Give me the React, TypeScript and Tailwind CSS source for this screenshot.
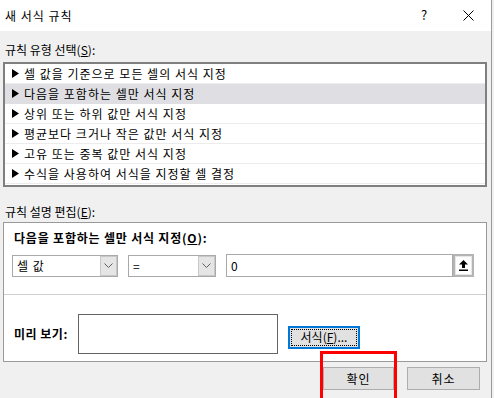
import React from "react";

const font = { fontFamily: '"Noto Sans CJK KR", "Noto Sans", sans-serif' };

function Tri() {
  return (
    <svg width="7" height="9" viewBox="0 0 7 9" className="shrink-0">
      <path d="M0 0 L7 4.5 L0 9 Z" fill="#000" />
    </svg>
  );
}

function Chevron() {
  return (
    <svg width="9" height="6" viewBox="0 0 9 6">
      <path d="M0.5 0.5 L4.5 4.5 L8.5 0.5" fill="none" stroke="#606060" strokeWidth="1" />
    </svg>
  );
}

function Combo({ w, text }: { w: string; text: string }) {
  return (
    <div className={`${w} h-[22px] border border-[#a9a9a9] bg-white flex items-stretch`}>
      <div className="flex-1 pl-[4px] flex items-center text-[12px] leading-[16px] tracking-[1px]">{text}</div>
      <div className="w-[17px] bg-[#e5e5e5] border border-[#c8c8c8] flex items-center justify-center">
        <Chevron />
      </div>
    </div>
  );
}

const rows = [
  "셀 값을 기준으로 모든 셀의 서식 지정",
  "다음을 포함하는 셀만 서식 지정",
  "상위 또는 하위 값만 서식 지정",
  "평균보다 크거나 작은 값만 서식 지정",
  "고유 또는 중복 값만 서식 지정",
  "수식을 사용하여 서식을 지정할 셀 결정",
];

export default function App() {
  return (
    <div className="w-[494px] h-[398px] relative overflow-hidden bg-[#f0f0f0] text-black" style={font}>
      <div className="w-[492px] h-[398px] border-r border-[#9a9a9a] flex flex-col">
        {/* title bar */}
        <div className="h-[31px] bg-white flex items-center shrink-0 relative">
          <span className="pl-[5px] text-[12px] leading-[16px] tracking-[1px]">새 서식 규칙</span>
          <span className="absolute left-[421px] top-[7px] text-[13px] leading-[16px]">?</span>
          <svg className="absolute left-[463px] top-[10px]" width="11" height="11" viewBox="0 0 11 11">
            <path d="M0.5 0.5 L10.5 10.5 M10.5 0.5 L0.5 10.5" stroke="#000" strokeWidth="1" />
          </svg>
        </div>

        {/* body */}
        <div className="px-[3px] flex flex-col">
          <div className="h-[31px] pt-[11px] pl-[2px] text-[12px] leading-[16px]">
            규칙 유형 선택(<span className="underline">S</span>):
          </div>
          <div className="w-[484px] h-[125px] border-2 border-[#7f7f7f] bg-white flex flex-col">
            {rows.map((r, i) => (
              <div
                key={i}
                className={`h-[20px] shrink-0 flex items-center gap-[5px] pl-[7px] border-b ${
                  i === 1 ? "bg-[#dfdfe3] border-[#dfdfe3]" : "border-[#ececec]"
                } text-[12px] leading-[16px] tracking-[1px]`}
              >
                <Tri />
                <span>{r}</span>
              </div>
            ))}
          </div>
          <div className="h-[35px] pt-[17px] pl-[2px] text-[12px] leading-[16px]">
            규칙 설명 편집(<span className="underline">E</span>):
          </div>

          {/* panel */}
          <div className="w-[484px] h-[140px] border border-[#9a9a9a] bg-white flex flex-col">
            <div className="pt-[7px] pl-[10px] text-[12px] leading-[16px] font-bold tracking-[0.8px]">
              다음을 포함하는 셀만 서식 지정(<span className="underline">O</span>):
            </div>
            <div className="mt-[8px] pl-[8px] flex items-center gap-[10px]">
              <Combo w="w-[106px]" text="셀 값" />
              <Combo w="w-[88px]" text="=" />
              <div className="flex items-stretch h-[23px]">
                <div className="w-[227px] border border-[#a9a9a9] bg-white flex items-center pl-[4px] text-[12px] leading-[16px]">
                  0
                </div>
                <div className="w-[21px] border-2 border-[#b4b4b4] bg-[#e6e6e6] p-[1px]">
                  <div className="w-full h-full bg-white flex items-center justify-center">
                    <svg width="9" height="11" viewBox="0 0 9 11">
                      <path d="M4.5 0 L9 4.5 L6 4.5 L6 8 L3 8 L3 4.5 L0 4.5 Z" fill="#000" />
                      <rect x="0" y="9.5" width="9" height="1.5" fill="#000" />
                    </svg>
                  </div>
                </div>
              </div>
            </div>
            <div className="mt-[17px] h-[1px] bg-[#cfcfcf]" />
            <div className="mt-[19px] pl-[10px] flex items-center">
              <span className="w-[64px] text-[12px] leading-[16px] font-bold tracking-[0.5px]">미리 보기:</span>
              <div className="w-[200px] h-[40px] border border-[#646464] bg-white" />
              <div className="ml-[10px] mt-[6px] w-[72px] h-[23px] border-2 border-[#0078d7] bg-[#e1e1e1] p-[1px]">
                <div className="w-full h-full border border-dotted border-black flex items-center justify-center text-[12px] leading-[16px]">
                  서식(<span className="underline">F</span>)...
                </div>
              </div>
            </div>
          </div>

          {/* buttons */}
          <div className="mt-[5px] flex justify-end gap-[13px] pr-[8px]">
            <div className="w-[71px] h-[23px] border border-[#adadad] bg-[#e1e1e1] flex items-center justify-center text-[12px] leading-[16px] tracking-[1px]">
              확인
            </div>
            <div className="w-[73px] h-[23px] border border-[#adadad] bg-[#e1e1e1] flex items-center justify-center text-[12px] leading-[16px] tracking-[1px]">
              취소
            </div>
          </div>
        </div>
      </div>
      {/* red annotation */}
      <div className="absolute left-[320px] top-[351px] w-[77px] h-[50px] border-[3px] border-[#ff0000]" />
    </div>
  );
}
